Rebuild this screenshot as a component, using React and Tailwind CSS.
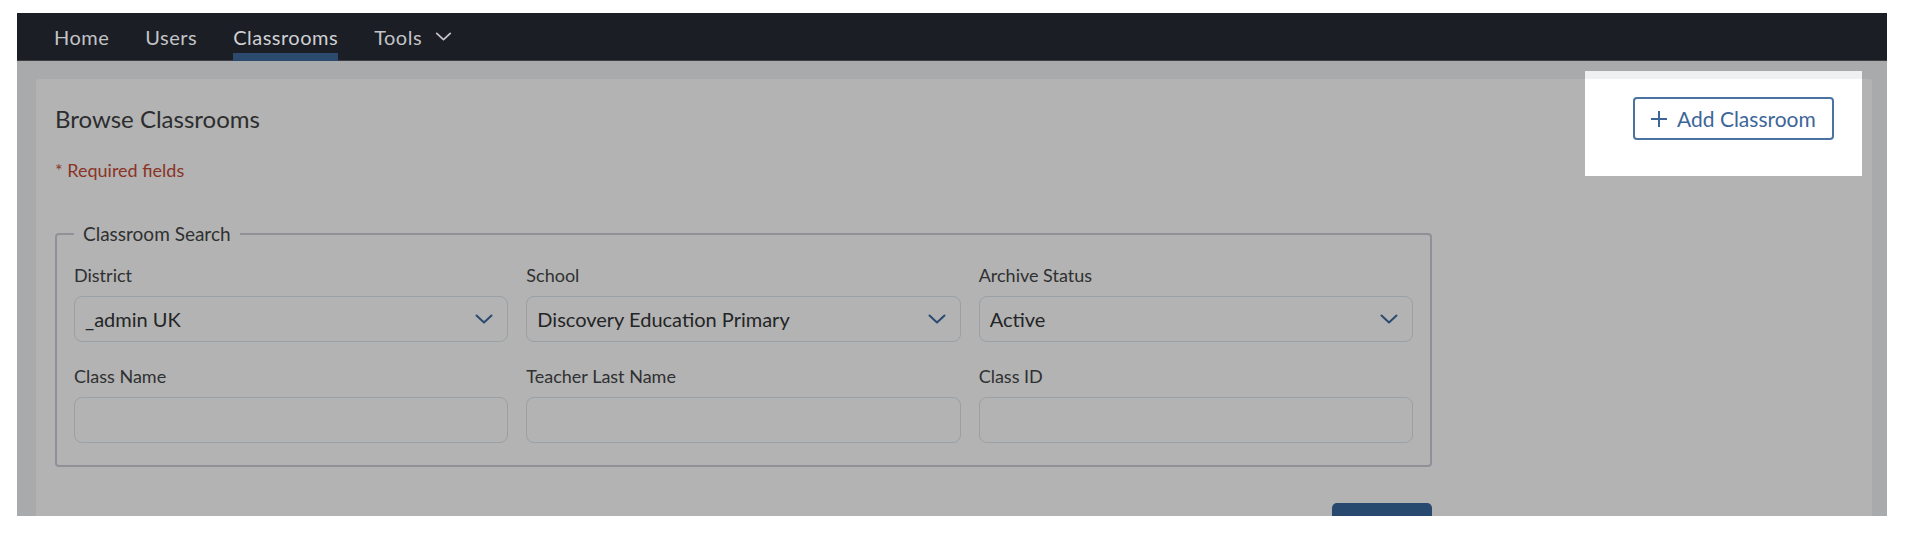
import { useState } from "react";

const Chevron = ({ className = "" }) => (
  <svg viewBox="0 0 18 10" className={className} fill="none">
    <path d="M1.5 1.5 L9 8.5 L16.5 1.5" stroke="currentColor" strokeWidth="2" strokeLinecap="round" strokeLinejoin="round" />
  </svg>
);

const navItems = ["Home", "Users", "Classrooms"];

const SelectField = ({ label, value }) => (
  <div className="flex flex-col">
    <label className="text-[18px] leading-[20px] text-[#2f3031]">{label}</label>
    <div className="mt-[11px] h-[46px] rounded-[8px] border border-[#99a0a6] flex items-center justify-between pl-[10px] pr-[14px]">
      <span className="text-[20px] text-[#242526]">{value}</span>
      <Chevron className="w-[18px] h-[10px] text-[#2b4a70]" />
    </div>
  </div>
);

const TextField = ({ label }) => (
  <div className="flex flex-col">
    <label className="text-[18px] leading-[20px] text-[#2f3031]">{label}</label>
    <input className="mt-[11px] h-[46px] rounded-[8px] border border-[#99a0a6] bg-transparent outline-none px-[10px]" />
  </div>
);

export default function App() {
  const [active] = useState("Classrooms");

  return (
    <div className="w-full h-[544px] bg-white pt-[13px] pl-[17px] pr-[19px] pb-[28px] font-['Lato',sans-serif]">
      <div className="h-full overflow-hidden bg-[#a9aaab] flex flex-col">
        {/* top nav */}
        <nav className="h-[48px] shrink-0 bg-[#1b1e24] border-b border-[#3a3d42] flex items-stretch gap-[36px] pl-[37px]">
          {navItems.map((item) => (
            <div
              key={item}
              className={`relative flex items-center text-[20px] tracking-[0.5px] ${item === active ? "text-[#cfd1d4]" : "text-[#c2c4c7]"}`}
            >
              {item}
              {item === active && (
                <span className="absolute left-0 right-0 -bottom-px h-[8px] bg-[#2c4a6e]" />
              )}
            </div>
          ))}
          <div className="flex items-center gap-[13px] text-[20px] tracking-[0.5px] text-[#c2c4c7]">
            Tools
            <Chevron className="w-[17px] h-[9px]" />
          </div>
        </nav>

        {/* page */}
        <div className="flex-1 pt-[18px] pl-[19px] pr-[15px]">
          <div className="h-full bg-[#b3b3b3] rounded-t-[3px] pl-[19px] pr-[38px]">
            <div className="flex items-center justify-between pt-[18px]">
              <h1 className="text-[24px] leading-[28px] text-[#2c2d2e]">Browse Classrooms</h1>
              <div className="relative">
                {/* spotlight behind the button */}
                <div className="absolute -left-[48px] -right-[28px] -top-[26px] -bottom-[36px] flex flex-col">
                  <div className="h-[8px] bg-[#eff0f1]" />
                  <div className="flex-1 bg-white" />
                </div>
                <button className="relative h-[43px] w-[201px] rounded-[4px] border-2 border-[#4b73a1] bg-white flex items-center gap-[9px] pl-[15px] text-[21px] text-[#3d6698]">
                  <svg viewBox="0 0 18 18" className="w-[18px] h-[18px]" fill="none">
                    <path d="M9 1 V17 M1 9 H17" stroke="currentColor" strokeWidth="2" />
                  </svg>
                  Add Classroom
                </button>
              </div>
            </div>

            <p className="mt-[20px] text-[18px] leading-[20px] text-[#8a3426]">* Required fields</p>

            <div className="w-[1377px] mt-[44px]">
              <fieldset className="border-2 border-[#8f9196] rounded-[4px] px-[17px] pb-[22px]">
                <legend className="px-[9px] text-[19px] leading-[20px] text-[#2f3031]">Classroom Search</legend>
                <div className="grid grid-cols-3 gap-x-[18px] gap-y-[24px] pt-[21px]">
                  <SelectField label="District" value="_admin UK" />
                  <SelectField label="School" value="Discovery Education Primary" />
                  <SelectField label="Archive Status" value="Active" />
                  <TextField label="Class Name" />
                  <TextField label="Teacher Last Name" />
                  <TextField label="Class ID" />
                </div>
              </fieldset>
              <div className="flex justify-end mt-[36px]">
                <button className="w-[100px] h-[56px] rounded-[5px] bg-[#27486f] text-white text-[17px]">Search</button>
              </div>
            </div>
          </div>
        </div>
      </div>
    </div>
  );
}
